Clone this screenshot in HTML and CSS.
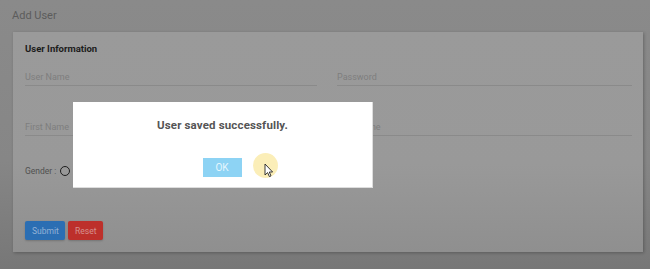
FILE: index.html
```html
<!DOCTYPE html>
<html lang="en">
<head>
<meta charset="utf-8">
<title>Add User</title>
<link rel="stylesheet" href="styles.css">
</head>
<body>
<div class="page">
  <h1 class="page-title">Add User</h1>
  <form class="card">
    <h2 class="card-title">User Information</h2>
    <div class="grid">
      <div class="field"><span class="placeholder">User Name</span></div>
      <div class="field"><span class="placeholder">Password</span></div>
      <div class="field"><span class="placeholder">First Name</span></div>
      <div class="field"><span class="placeholder">Last Name</span></div>
    </div>
    <div class="gender">
      <span class="gender-label">Gender :</span>
      <span class="radio"></span>
    </div>
    <div class="actions">
      <button type="button" class="btn btn-submit">Submit</button>
      <button type="button" class="btn btn-reset">Reset</button>
    </div>
  </form>
</div>
<div class="overlay"></div>
<div class="dialog">
  <p class="dialog-title">User saved successfully.</p>
  <button type="button" class="btn-ok">OK</button>
</div>
<div class="cursor-halo"></div>
<svg class="cursor" width="10" height="15" viewBox="0 0 10 15">
  <path d="M1 1 L1 12 L3.6 9.6 L5.4 13.6 L7 12.9 L5.3 9 L8.6 9 Z" fill="#fff" stroke="#222" stroke-width="0.9" stroke-linejoin="round"/>
</svg>
</body>
</html>
```

FILE: styles.css
```css
* { box-sizing: border-box; }
html, body { margin: 0; padding: 0; }
body {
  width: 650px;
  height: 269px;
  overflow: hidden;
  font-family: Roboto, "Liberation Sans", Arial, sans-serif;
  background: linear-gradient(#8a8a8a 0%, #868686 60%, #777 100%);
  position: relative;
}
.page {
  padding: 9px 7px 0 13px;
}
.page-title {
  margin: 0 0 9px -1px;
  font-size: 11px;
  font-weight: 400;
  color: #5c5c5c;
  line-height: 14px;
}
.card {
  width: 630px;
  height: 220px;
  background: linear-gradient(#9a9a9a 0%, #999 60%, #8f8f8f 100%);
  box-shadow: 1px 1px 3px rgba(0,0,0,0.25);
  padding: 11px 11px 0 12px;
}
.card-title {
  margin: 0;
  font-size: 9.5px;
  font-weight: 700;
  color: #1c1c1c;
  line-height: 12px;
}
.grid {
  display: grid;
  grid-template-columns: 292px 295px;
  column-gap: 20px;
  row-gap: 0;
  margin-top: 9px;
}
.field {
  height: 50px;
  padding-top: 7px;
}
.placeholder {
  display: block;
  font-size: 9px;
  line-height: 12px;
  color: #7e7e7e;
  padding-bottom: 2px;
  border-bottom: 1px solid #8a8a8a;
  width: 100%;
}
.gender {
  display: flex;
  align-items: center;
  gap: 4px;
  margin-top: 0;
  height: 14px;
}
.gender-label {
  font-size: 8.5px;
  color: #505050;
}
.radio {
  width: 10px;
  height: 10px;
  border: 1.5px solid #1e1e1e;
  border-radius: 50%;
}
.actions {
  display: flex;
  gap: 3px;
  margin-top: 43px;
}
.btn {
  height: 19px;
  border: none;
  border-radius: 2px;
  font-family: inherit;
  font-size: 8.5px;
  padding: 0 7px;
  box-shadow: 0 1px 2px rgba(0,0,0,0.2);
}
.btn-submit { width: 40px; background: #2b6eb3; color: #93b2d6; }
.btn-reset { width: 35px; background: #bd302b; color: #d6928f; }
.overlay {
  position: absolute;
  inset: 0;
  background: transparent;
  pointer-events: none;
}
.dialog {
  position: absolute;
  left: 73px;
  top: 102px;
  width: 300px;
  height: 86px;
  background: #fff;
  border-right: 1px solid #ddd;
  border-bottom: 1px solid #ddd;
  display: flex;
  flex-direction: column;
  align-items: center;
  padding-top: 16px;
}
.dialog-title {
  margin: 0;
  font-size: 11.5px;
  font-weight: 700;
  color: #555;
  line-height: 14px;
  letter-spacing: 0.15px;
}
.btn-ok {
  margin-top: 26px;
  margin-left: -1px;
  width: 39px;
  height: 19px;
  border: none;
  background: #8dd3f4;
  color: #e6f6fd;
  font-family: inherit;
  font-size: 10px;
  padding: 0;
}
.cursor-halo {
  position: absolute;
  left: 253px;
  top: 153px;
  width: 25px;
  height: 25px;
  border-radius: 50%;
  background: rgba(250, 232, 160, 0.75);
}
.cursor {
  position: absolute;
  left: 264px;
  top: 163px;
}
```
